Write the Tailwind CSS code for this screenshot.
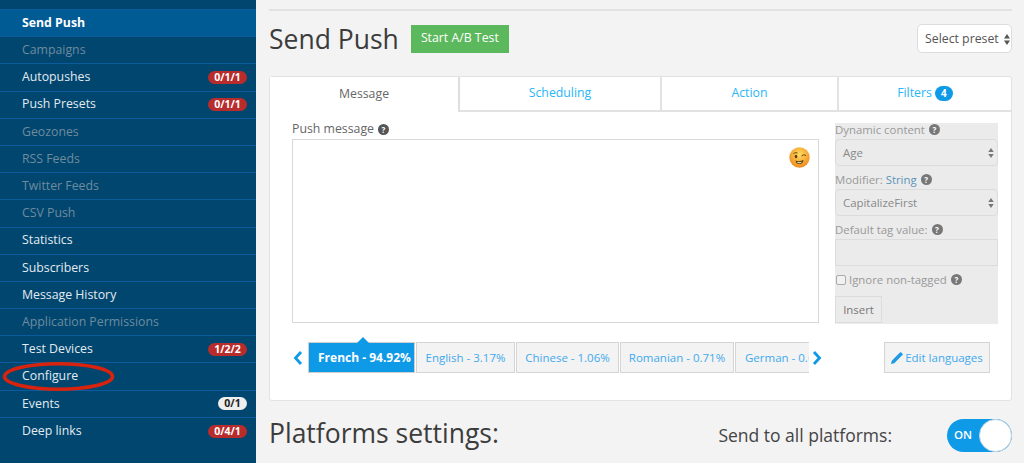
<!DOCTYPE html>
<html lang="en">
<head>
  <meta charset="UTF-8">
  <title>Send Push</title>
  <script src="https://cdn.jsdelivr.net/npm/@tailwindcss/browser@4"></script>
</head>
<body class="w-[1024px] h-[463px] overflow-hidden bg-[#f3f3f3] font-['Open_Sans',sans-serif] flex relative">

  <!-- sidebar -->
  <aside class="w-[256px] h-[463px] shrink-0 bg-[#00466f] text-[12.3px] text-[#e4ebf0]">
    <div class="h-[10px] border-b border-[#0a5c9e]"></div>
    <a class="h-[27.2px] flex items-center justify-between pl-[22px] pr-[9px] border-b border-[#0a5c9e] bg-[#005a94] font-bold text-white">Send Push</a>
    <a class="h-[27.2px] flex items-center justify-between pl-[22px] pr-[9px] border-b border-[#0a5c9e] text-[#6f8b9e]">Campaigns</a>
    <a class="h-[27.2px] flex items-center justify-between pl-[22px] pr-[9px] border-b border-[#0a5c9e]">Autopushes <span class="w-[39px] h-[13px] rounded-full bg-[#b92c2c] text-white text-[10.5px] font-bold leading-[13px] text-center">0/1/1</span></a>
    <a class="h-[27.2px] flex items-center justify-between pl-[22px] pr-[9px] border-b border-[#0a5c9e]">Push Presets <span class="w-[39px] h-[13px] rounded-full bg-[#b92c2c] text-white text-[10.5px] font-bold leading-[13px] text-center">0/1/1</span></a>
    <a class="h-[27.2px] flex items-center justify-between pl-[22px] pr-[9px] border-b border-[#0a5c9e] text-[#6f8b9e]">Geozones</a>
    <a class="h-[27.2px] flex items-center justify-between pl-[22px] pr-[9px] border-b border-[#0a5c9e] text-[#6f8b9e]">RSS Feeds</a>
    <a class="h-[27.2px] flex items-center justify-between pl-[22px] pr-[9px] border-b border-[#0a5c9e] text-[#6f8b9e]">Twitter Feeds</a>
    <a class="h-[27.2px] flex items-center justify-between pl-[22px] pr-[9px] border-b border-[#0a5c9e] text-[#6f8b9e]">CSV Push</a>
    <a class="h-[27.2px] flex items-center justify-between pl-[22px] pr-[9px] border-b border-[#0a5c9e]">Statistics</a>
    <a class="h-[27.2px] flex items-center justify-between pl-[22px] pr-[9px] border-b border-[#0a5c9e]">Subscribers</a>
    <a class="h-[27.2px] flex items-center justify-between pl-[22px] pr-[9px] border-b border-[#0a5c9e]">Message History</a>
    <a class="h-[27.2px] flex items-center justify-between pl-[22px] pr-[9px] border-b border-[#0a5c9e] text-[#6f8b9e]">Application Permissions</a>
    <a class="h-[27.2px] flex items-center justify-between pl-[22px] pr-[9px] border-b border-[#0a5c9e]">Test Devices <span class="w-[39px] h-[13px] rounded-full bg-[#b92c2c] text-white text-[10.5px] font-bold leading-[13px] text-center">1/2/2</span></a>
    <a class="h-[27.2px] flex items-center justify-between pl-[22px] pr-[9px] border-b border-[#0a5c9e]">Configure</a>
    <a class="h-[27.2px] flex items-center justify-between pl-[22px] pr-[9px] border-b border-[#0a5c9e]">Events <span class="w-[29px] h-[13px] rounded-full bg-[#eeeeee] text-[#222] text-[10.5px] font-bold leading-[13px] text-center">0/1</span></a>
    <a class="h-[27.2px] flex items-center justify-between pl-[22px] pr-[9px]">Deep links <span class="w-[39px] h-[13px] rounded-full bg-[#b92c2c] text-white text-[10.5px] font-bold leading-[13px] text-center">0/4/1</span></a>
  </aside>

  <!-- red annotation round Configure -->
  <svg class="absolute left-0 top-[360px]" width="118" height="33" viewBox="0 0 118 33"><ellipse cx="58.500" cy="16.500" rx="54" ry="12.800" fill="none" stroke="#d8230f" stroke-width="3.600"/></svg>

  <main class="flex-1 pl-[13px] pr-[12px] pt-[9px]">
    <div class="h-[2px] bg-[#e2e2e2]"></div>

    <div class="flex items-center h-[29px] mt-[13px]">
      <h1 class="text-[26.500px] leading-[29px] pt-[2px] text-[#3c3c3c]">Send Push</h1>
      <button class="ml-[12px] w-[98px] h-[28px] bg-[#5cb85c] text-white text-[12.300px] font-medium">Start A/B Test</button>
      <div class="ml-auto w-[95px] h-[29px] pt-[1px] bg-white border border-[#dcdcdc] rounded-[5px] flex items-center pl-[7px] text-[12.300px] text-[#555]">
        Select preset
        <svg class="ml-[5px]" width="6" height="11" viewBox="0 0 6 11" fill="#555"><path d="M3 0l3 4.500H0zM3 11L0 6.500h6z"/></svg>
      </div>
    </div>

    <section class="mt-[23px] h-[325px] bg-white border border-[#e2e2e2] rounded-[3px]">
      <!-- tabs -->
      <div class="flex h-[35px] text-[12.300px] text-[#29b6f6]">
        <div class="w-[190px] h-[35px] flex items-center justify-center border-r-2 border-[#dedede] text-[#666] bg-white">Message</div>
        <div class="w-[202px] flex items-center justify-center border-r-2 border-b-2 border-[#e2e2e2]">Scheduling</div>
        <div class="w-[177px] flex items-center justify-center border-r-2 border-b-2 border-[#e2e2e2]">Action</div>
        <div class="flex-1 flex items-center justify-center gap-[3px] border-b-2 border-[#e2e2e2]">Filters <span class="w-[18px] h-[15px] rounded-full bg-[#0f9ae8] text-white text-[10px] font-bold leading-[15px] text-center">4</span></div>
      </div>

      <div class="flex pl-[22px] pr-[13px]">
        <!-- message -->
        <div class="w-[527px]">
          <div class="h-[27px] flex items-end pb-[4px] text-[12.300px] text-[#666] leading-none">Push message <span class="ml-[4px] w-[11px] h-[11px] rounded-full bg-[#555] text-white text-[8px] font-bold leading-[11px] text-center">?</span></div>
          <div class="relative h-[184px] bg-white border border-[#d8d8d8]">
            <svg class="absolute right-[8px] top-[7px]" width="21" height="21" viewBox="0 0 21 21">
              <defs><radialGradient id="face" cx="50%" cy="35%" r="65%"><stop offset="0" stop-color="#ffdc5e"/><stop offset="1" stop-color="#ee8a1c"/></radialGradient></defs>
              <circle cx="10.500" cy="10.500" r="10.200" fill="url(#face)"/>
              <path d="M4.500 6.500q2-1.500 4-.5M12.500 9q2-2.200 4.500-.5" stroke="#6b4210" stroke-width="1" fill="none"/>
              <ellipse cx="7" cy="9.500" rx="1.300" ry="1.700" fill="#5a3a12"/>
              <path d="M6.500 13.500q4 1.500 8-.5q-.5 4-4 4t-4-3.500z" fill="#5a3a12"/>
              <path d="M8 14.800q2.500.8 5-.2q-.6 1.700-2.500 1.700t-2.500-1.500z" fill="#fff3c4"/>
            </svg>
          </div>
        </div>

        <!-- dynamic content -->
        <div class="ml-[16px] mt-[11px] w-[163px] h-[201px] bg-[#ebebeb] text-[11.400px] text-[#999] leading-none">
          <div class="h-[13px] flex items-center">Dynamic content <span class="ml-[4px] w-[11px] h-[11px] rounded-full bg-[#777] text-white text-[8px] font-bold leading-[11px] text-center">?</span></div>
          <div class="mt-[3px] h-[27px] border border-[#dcdcdc] rounded-[4px] flex items-center justify-between pl-[7px] pr-[3px] text-[#888]">Age
            <svg width="6" height="10" viewBox="0 0 6 11" fill="#777"><path d="M3 0l3 4.500H0zM3 11L0 6.500h6z"/></svg>
          </div>
          <div class="mt-[7px] h-[13px] flex items-center">Modifier:&nbsp;<span class="text-[#5b93b8]">String</span> <span class="ml-[4px] w-[11px] h-[11px] rounded-full bg-[#777] text-white text-[8px] font-bold leading-[11px] text-center">?</span></div>
          <div class="mt-[3px] h-[27px] border border-[#dcdcdc] rounded-[4px] flex items-center justify-between pl-[7px] pr-[3px] text-[#888]">CapitalizeFirst
            <svg width="6" height="10" viewBox="0 0 6 11" fill="#777"><path d="M3 0l3 4.500H0zM3 11L0 6.500h6z"/></svg>
          </div>
          <div class="mt-[7px] h-[13px] flex items-center">Default tag value: <span class="ml-[4px] w-[11px] h-[11px] rounded-full bg-[#777] text-white text-[8px] font-bold leading-[11px] text-center">?</span></div>
          <div class="mt-[3px] h-[27px] border border-[#dcdcdc]"></div>
          <div class="mt-[7px] h-[13px] flex items-center"><span class="ml-[1px] mr-[3px] w-[10px] h-[10px] border border-[#aaa] rounded-[2px] bg-white/30"></span>Ignore non-tagged <span class="ml-[4px] w-[11px] h-[11px] rounded-full bg-[#777] text-white text-[8px] font-bold leading-[11px] text-center">?</span></div>
          <div class="mt-[10px] w-[47px] h-[27px] border border-[#dcdcdc] flex items-center justify-center text-[#777]">Insert</div>
        </div>
      </div>

      <!-- languages -->
      <div class="relative mt-[18px] ml-[22px] pr-[21px] flex items-center text-[11.500px] text-[#3fa9ee]">
        <svg width="16" height="18" viewBox="0 0 16 18" fill="none" stroke="#0f9ae8" stroke-width="2.800"><path d="M9 3L3.500 9 9 15"/></svg>
        <div class="w-[501px] overflow-hidden flex gap-[1px] whitespace-nowrap">
          <div class="shrink-0 w-[107px] h-[31px] flex items-center pl-[9px] bg-[#0f9ae8] text-white text-[12px] font-bold border border-[#cfcfcf]">French - 94.92%</div>
          <div class="shrink-0 w-[99px] h-[31px] flex items-center justify-center bg-[#f3f3f3] border border-[#d4d4d4]">English - 3.17%</div>
          <div class="shrink-0 w-[103px] h-[31px] flex items-center justify-center bg-[#f3f3f3] border border-[#d4d4d4]">Chinese - 1.06%</div>
          <div class="shrink-0 w-[114px] h-[31px] flex items-center justify-center bg-[#f3f3f3] border border-[#d4d4d4]">Romanian - 0.71%</div>
          <div class="shrink-0 w-[114px] h-[31px] flex items-center pl-[9px] bg-[#f3f3f3] border border-[#d4d4d4]">German - 0.61%</div>
        </div>
        <svg width="16" height="18" viewBox="0 0 16 18" fill="none" stroke="#0f9ae8" stroke-width="2.800"><path d="M5 3l5.500 6L5 15"/></svg>
        <div class="ml-auto w-[106px] h-[31px] flex items-center justify-center gap-[2px] bg-[#f3f3f3] border border-[#d4d4d4]">
          <svg width="12" height="12" viewBox="0 0 12 12" fill="#1f9be6"><path d="M0 12l.8-3.300L8.400 1.100l2.500 2.500-7.600 7.600zM9.100.4l.6-.4 2.300 2.300-.4.600-.9.900L8.200 1.300z"/></svg>
          Edit languages
        </div>
        <span class="absolute left-[65px] -top-[5px] w-0 h-0 border-x-[6px] border-x-transparent border-b-[6px] border-b-[#0f9ae8]"></span>
      </div>
    </section>

    <div class="flex items-center mt-[17px] h-[34px]">
      <h2 class="text-[26.500px] leading-[34px] mb-[4px] text-[#3c3c3c]">Platforms settings:</h2>
      <span class="ml-auto text-[17.500px] text-[#444]">Send to all platforms:</span>
      <div class="ml-[55px] w-[65px] h-[33px] rounded-full bg-[#0f9ae8] flex items-center justify-between pl-[7px] text-white text-[11.500px] font-semibold">
        ON
        <span class="w-[33px] h-[33px] rounded-full bg-white border border-[#c8d6e0]"></span>
      </div>
    </div>
  </main>
</body>
</html>
